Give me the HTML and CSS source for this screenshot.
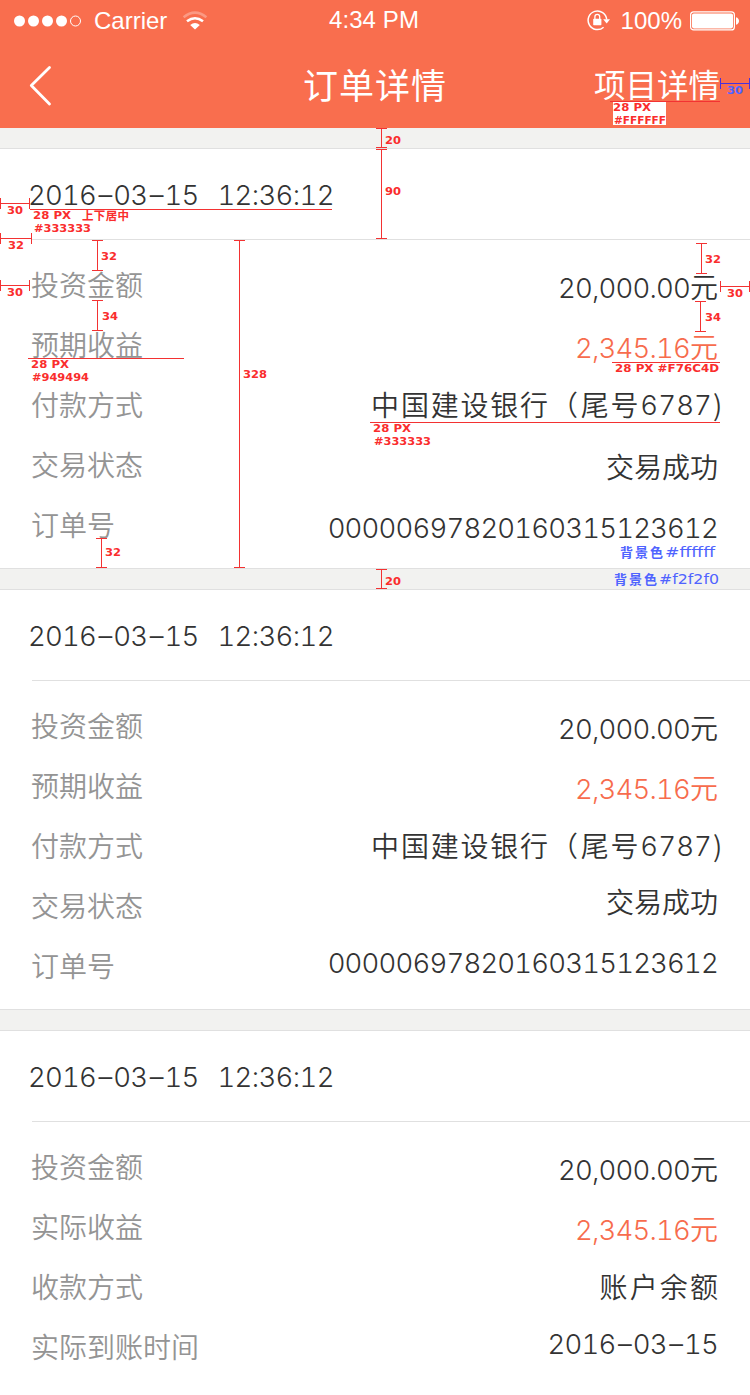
FILE: index.html
```
<!DOCTYPE html>
<html lang="zh-CN">
<head>
<meta charset="utf-8">
<title>订单详情</title>
<link rel="stylesheet" href="styles.css">
</head>
<body>
<main class="screen">
  <header class="header">
    <div class="status">
      <div class="status-left">
        <svg class="signal" width="68" height="12" viewBox="0 0 68 12"><g fill="#fff"><circle cx="5.5" cy="6" r="5.5"/><circle cx="19.5" cy="6" r="5.5"/><circle cx="33.5" cy="6" r="5.5"/><circle cx="47.5" cy="6" r="5.5"/></g><circle cx="61.5" cy="6" r="5" fill="none" stroke="#fff"/></svg>
        <span class="carrier">Carrier</span>
        <svg class="wifi" width="26" height="19" viewBox="0 0 26 19"><g fill="none" stroke="#fff"><path d="M1.600 6.200Q13-3 24.400 6.200" stroke-width="2.600" opacity=".3"/><path d="M5 10.300Q13 4.200 21 10.300" stroke-width="2.600"/></g><path d="M8.200 14Q13 10 17.800 14L13 18.500Z" fill="#fff"/></svg>
      </div>
      <span class="clock">4:34 PM</span>
      <div class="status-right">
        <svg class="lock" width="24" height="21" viewBox="0 0 24 21"><path d="M16.6 17.2A9.3 9.3 0 1 1 19.7 9.5" fill="none" stroke="#fff" stroke-width="1.5"/><path d="M16.2 9.2H23L19.7 13.5Z" fill="#fff"/><rect x="6.2" y="8.8" width="8.2" height="6.4" rx=".6" fill="#fff"/><path d="M7.9 9V6.8a2.4 2.4 0 0 1 4.8 0V9" fill="none" stroke="#fff" stroke-width="1.3"/></svg>
        <span class="percent">100%</span>
        <svg class="battery" width="50" height="20" viewBox="0 0 50 20"><rect x=".6" y=".9" width="43.8" height="18" rx="3" fill="none" stroke="#fff" stroke-width="1.2"/><rect x="2" y="2.4" width="41" height="15" rx="1.8" fill="#fff"/><path d="M46 6.2q3 1 3 3.8t-3 3.8Z" fill="#fff"/></svg>
      </div>
    </div>
    <nav class="nav">
      <svg class="back" width="24" height="42" viewBox="0 0 24 42"><path d="M20.5 2.5L2.3 20.6L20.5 39" fill="none" stroke="#fff" stroke-width="2.8" stroke-linecap="round" stroke-linejoin="round"/></svg>
      <h1 class="title">订单详情</h1>
      <a class="project">项目详情</a>
    </nav>
  </header>

  <section class="card">
    <div class="date">2016<span class="dash">–</span>03<span class="dash">–</span>15<span class="time">12:36:12</span></div>
    <dl class="rows">
      <div class="row"><dt>投资金额</dt><dd class="low"><span class="num">20,000.00</span>元</dd></div>
      <div class="row"><dt>预期收益</dt><dd class="low accent"><span class="num">2,345.16</span>元</dd></div>
      <div class="row"><dt>付款方式</dt><dd class="bank">中国建设银行<span class="paren">（</span>尾号<span class="digits">6787</span>)</dd></div>
      <div class="row"><dt>交易状态</dt><dd class="low">交易成功</dd></div>
      <div class="row"><dt>订单号</dt><dd class="low"><span class="num">00000697820160315123612</span></dd></div>
    </dl>
  </section>

  <section class="card">
    <div class="date">2016<span class="dash">–</span>03<span class="dash">–</span>15<span class="time">12:36:12</span></div>
    <dl class="rows">
      <div class="row"><dt>投资金额</dt><dd class="low"><span class="num">20,000.00</span>元</dd></div>
      <div class="row"><dt>预期收益</dt><dd class="low accent"><span class="num">2,345.16</span>元</dd></div>
      <div class="row"><dt>付款方式</dt><dd class="bank">中国建设银行<span class="paren">（</span>尾号<span class="digits">6787</span>)</dd></div>
      <div class="row"><dt>交易状态</dt><dd class="high">交易成功</dd></div>
      <div class="row"><dt>订单号</dt><dd class="high"><span class="num">00000697820160315123612</span></dd></div>
    </dl>
  </section>

  <section class="card">
    <div class="date">2016<span class="dash">–</span>03<span class="dash">–</span>15<span class="time">12:36:12</span></div>
    <dl class="rows">
      <div class="row"><dt>投资金额</dt><dd class="low"><span class="num">20,000.00</span>元</dd></div>
      <div class="row"><dt>实际收益</dt><dd class="low accent"><span class="num">2,345.16</span>元</dd></div>
      <div class="row"><dt>收款方式</dt><dd class="account">账户余额</dd></div>
      <div class="row"><dt>实际到账时间</dt><dd class="high"><span class="num">2016<span class="dash">–</span>03<span class="dash">–</span>15</span></dd></div>
    </dl>
  </section>

  <!-- Spec annotations laid over the screen -->
  <svg class="specs" width="750" height="1395" viewBox="0 0 750 1395">
    <rect x="613" y="102" width="53" height="23" fill="#fff"/>
    <g class="lines">
      <path d="M376 128.5h11M381.5 128v20M376 147.5h11"/>
      <path d="M376 149.5h11M381.5 149v90M376 238.5h11"/>
      <path d="M234 240.5h11M239.5 240v328M234 567.5h11"/>
      <path d="M.5 198v11M0 203.5h30M29.5 198v11M30 209.5h302"/>
      <path d="M.5 233v11M0 238.5h32M31.5 233v11"/>
      <path d="M92 240.5h11M97.5 240v31M92 270.5h11"/>
      <path d="M.5 280v11M0 285.5h30M29.5 280v11"/>
      <path d="M92 300.5h11M97.5 300v31M92 330.5h11M28 358.5h156"/>
      <path d="M96 538.5h11M101.5 538v30M96 567.5h11"/>
      <path d="M696 243.5h11M701.5 243v31M696 273.5h11"/>
      <path d="M720.5 281v11M720 286.5h30M749.5 281v11"/>
      <path d="M695 301.5h11M700.5 301v31M695 331.5h11M612 362.5h108"/>
      <path d="M370 422.5h350M610 101.5h110"/>
      <path d="M376 569.5h11M381.5 569v20M376 588.5h11"/>
      <path class="blue-line" d="M720.5 78v11M720 83.5h30M749.5 78v11"/>
    </g>
    <g class="notes">
      <text x="385" y="144" textLength="16" lengthAdjust="spacingAndGlyphs">20</text>
      <text x="385" y="195" textLength="16" lengthAdjust="spacingAndGlyphs">90</text>
      <text x="243" y="378" textLength="24" lengthAdjust="spacingAndGlyphs">328</text>
      <text x="7" y="214" textLength="16" lengthAdjust="spacingAndGlyphs">30</text>
      <text x="8" y="249" textLength="16" lengthAdjust="spacingAndGlyphs">32</text>
      <text x="101" y="260" textLength="16" lengthAdjust="spacingAndGlyphs">32</text>
      <text x="7" y="296" textLength="16" lengthAdjust="spacingAndGlyphs">30</text>
      <text x="102" y="320" textLength="16" lengthAdjust="spacingAndGlyphs">34</text>
      <text x="105" y="556" textLength="16" lengthAdjust="spacingAndGlyphs">32</text>
      <text x="705" y="263" textLength="16" lengthAdjust="spacingAndGlyphs">32</text>
      <text x="727" y="297" textLength="16" lengthAdjust="spacingAndGlyphs">30</text>
      <text x="705" y="321" textLength="16" lengthAdjust="spacingAndGlyphs">34</text>
      <text x="385" y="585" textLength="16" lengthAdjust="spacingAndGlyphs">20</text>
      <text x="33" y="219" textLength="38" lengthAdjust="spacingAndGlyphs">28 PX</text>
      <text x="82" y="219.5" textLength="47" class="note-cjk">上下居中</text>
      <text x="34" y="232" textLength="57" lengthAdjust="spacingAndGlyphs">#333333</text>
      <text x="31" y="368" textLength="38" lengthAdjust="spacingAndGlyphs">28 PX</text>
      <text x="32" y="381" textLength="57" lengthAdjust="spacingAndGlyphs">#949494</text>
      <text x="615" y="372" textLength="104" lengthAdjust="spacingAndGlyphs">28 PX #F76C4D</text>
      <text x="373" y="432" textLength="38" lengthAdjust="spacingAndGlyphs">28 PX</text>
      <text x="374" y="445" textLength="57" lengthAdjust="spacingAndGlyphs">#333333</text>
      <text x="613" y="111" textLength="38" lengthAdjust="spacingAndGlyphs">28 PX</text>
      <text x="614" y="124" textLength="52" lengthAdjust="spacingAndGlyphs">#FFFFFF</text>
      <text x="727" y="94" textLength="16" lengthAdjust="spacingAndGlyphs" class="blue">30</text>
      <text x="620" y="556.5" class="blue bg-note">背景色</text>
      <text x="665" y="556.5" textLength="50" lengthAdjust="spacingAndGlyphs" class="blue bg-code">#ffffff</text>
      <text x="614" y="583.5" class="blue bg-note">背景色</text>
      <text x="659" y="583.5" textLength="60" lengthAdjust="spacingAndGlyphs" class="blue bg-code">#f2f2f0</text>
    </g>
  </svg>
</main>
</body>
</html>
```

FILE: styles.css
```
* { box-sizing: border-box; }

body {
  margin: 0;
  background: #fff;
  color: #333;
  font-family: "Noto Sans CJK SC", sans-serif;
  font-size: 28px;
  font-weight: 350;
}

.screen {
  position: relative;
  width: 750px;
  height: 1395px;
  overflow: hidden;
}

.header {
  height: 128px;
  background: #f96e4e;
  color: #fff;
}

.status {
  display: grid;
  grid-template-columns: 1fr auto 1fr;
  align-items: center;
  height: 40px;
  padding: 0 12px 0 14px;
  font: 400 24px/40px "Liberation Sans", Arial, sans-serif;
}

.status-left,
.status-right {
  display: flex;
  align-items: center;
}

.status-right {
  justify-content: flex-end;
  margin-right: -2px;
}

.carrier { margin-left: 12px; padding-top: 1px; }
.wifi { margin: 0 0 0 15px; }
.clock { margin: -1px 4px 0 0; letter-spacing: 0.1px; }
.percent { margin: 1px 8px 0 10px; }

.nav {
  display: grid;
  grid-template-columns: 1fr auto 1fr;
  align-items: center;
  height: 88px;
  padding: 0 30px 0 29px;
  line-height: 88px;
}

.back { margin-top: 3px; }

.title {
  margin: 0 0 0 1px;
  font-size: 35px;
  font-weight: 400;
  letter-spacing: 1px;
}

.project {
  justify-self: end;
  margin-top: -3px;
  font-size: 31.5px;
  font-weight: 400;
}

.card {
  height: 441px;
  padding-top: 20px;
  background: linear-gradient(#f2f2f0 20px, #e0e0e0 20px, #e0e0e0 21px, #fff 21px);
  border-bottom: 1px solid #e0e0e0;
}

.date,
.num,
.digits {
  font-family: Inter, sans-serif;
  font-size: 27.5px;
  font-weight: 300;
  font-variant-numeric: tabular-nums;
  letter-spacing: -0.82px;
}

.date {
  height: 91px;
  padding: 1px 0 0 28px;
  line-height: 92px;
}

.dash {
  padding: 0 1.8px 0 2.6px;
}

.time { margin-left: 19px; letter-spacing: -0.65px; }

.rows {
  margin: 0 0 0 32px;
  padding: 14px 32px 0 0;
  border-top: 1px solid #e0e0e0;
}

.row {
  display: flex;
  justify-content: space-between;
  align-items: flex-start;
  height: 60px;
  line-height: 60px;
  white-space: nowrap;
}

dt { color: #949494; margin-left: -1px; }
dd { margin: 0; }
.low { margin-top: 2px; }
.high { margin-top: -4px; }
.accent { color: #f76c4d; }

.bank { margin-right: -6px; letter-spacing: 1.8px; }
.account { margin-right: -2px; letter-spacing: 2.1px; }

.digits {
  letter-spacing: 0.1px;
  vertical-align: 1px;
  line-height: 1;
  margin-right: 1px;
}

.paren { margin-right: 1px; }

.specs {
  position: absolute;
  top: 0;
  left: 0;
}

.lines {
  fill: none;
  stroke: #f33232;
  stroke-width: 1;
  shape-rendering: crispEdges;
}

.lines .blue-line { stroke: #4a30dc; }

.notes {
  fill: #fa2d2d;
  font-family: "DejaVu Sans", "Noto Sans CJK SC", sans-serif;
  font-size: 10.5px;
  font-weight: 700;
}

.notes .note-cjk { font-size: 11.5px; }
.notes .blue { fill: #4f63ff; }

.notes .bg-note {
  font-size: 13px;
  font-weight: 600;
  letter-spacing: 2px;
}

.notes .bg-code {
  font-size: 13.5px;
  font-weight: 400;
}
```
